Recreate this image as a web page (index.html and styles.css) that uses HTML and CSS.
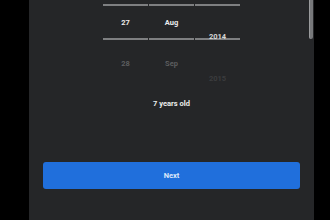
FILE: index.html
```html
<!DOCTYPE html>
<html lang="en">
<head>
  <meta charset="UTF-8">
  <title>Birthday</title>
  <link rel="stylesheet" href="styles.css">
</head>
<body>

  <div class="screen">
    <div class="scrollbar"></div>

    <div class="picker">
      <div class="col">
        <div class="list">
          <div class="item active">27</div>
          <div class="item dim">28</div>
        </div>
      </div>
      <div class="col">
        <div class="list">
          <div class="item active">Aug</div>
          <div class="item dim">Sep</div>
        </div>
      </div>
      <div class="col">
        <div class="list year-list">
          <div class="item year">2014</div>
          <div class="item faint">2015</div>
        </div>
      </div>
    </div>

    <div class="age">7 years old</div>

    <button class="next-btn">Next</button>
  </div>

</body>
</html>
```

FILE: styles.css
```css
html, body {
  margin: 0;
  padding: 0;
  height: 100%;
  background: #000;
  font-family: Roboto, "Liberation Sans", sans-serif;
  overflow: hidden;
}

.screen {
  position: relative;
  width: 285px;
  height: 220px;
  margin-left: 29px;
  background: #252628;
  display: flex;
  flex-direction: column;
}

.scrollbar {
  position: absolute;
  top: 0;
  right: 1px;
  width: 3px;
  height: 39px;
  background: #77787a;
  border-left: 1px solid #9a9b9d;
  border-radius: 0 0 2px 2px;
}

.picker {
  display: flex;
  gap: 1px;
  padding-left: 74px;
  height: 88px;
}

.col {
  position: relative;
  width: 45px;
}

.col::before {
  content: "";
  position: absolute;
  left: 0;
  right: 0;
  top: 4px;
  height: 32px;
  border-top: 2px solid #7e7f81;
  border-bottom: 2px solid #7e7f81;
}

.list {
  position: relative;
  padding-top: 2px;
}

.year-list {
  padding-top: 16px;
}

.item {
  height: 41px;
  line-height: 41px;
  text-align: center;
  font-size: 7.5px;
}

.active {
  color: #ececec;
  font-weight: bold;
}

.year {
  color: #d6d6d6;
  font-weight: bold;
  height: 42px;
  line-height: 42px;
}

.dim {
  color: #5c5d5f;
  font-weight: bold;
}

.faint {
  color: #3b3c3e;
  font-weight: bold;
  height: 42px;
  line-height: 42px;
}

.age {
  margin-top: 11px;
  text-align: center;
  color: #ececec;
  font-size: 7.5px;
  font-weight: bold;
}

.next-btn {
  margin: 54px 14px 0 14px;
  height: 27px;
  background: #206fdc;
  color: #dce8fa;
  border: none;
  border-radius: 3px;
  font-family: Roboto, "Liberation Sans", sans-serif;
  font-size: 7.5px;
  font-weight: bold;
  padding: 0;
}
```
